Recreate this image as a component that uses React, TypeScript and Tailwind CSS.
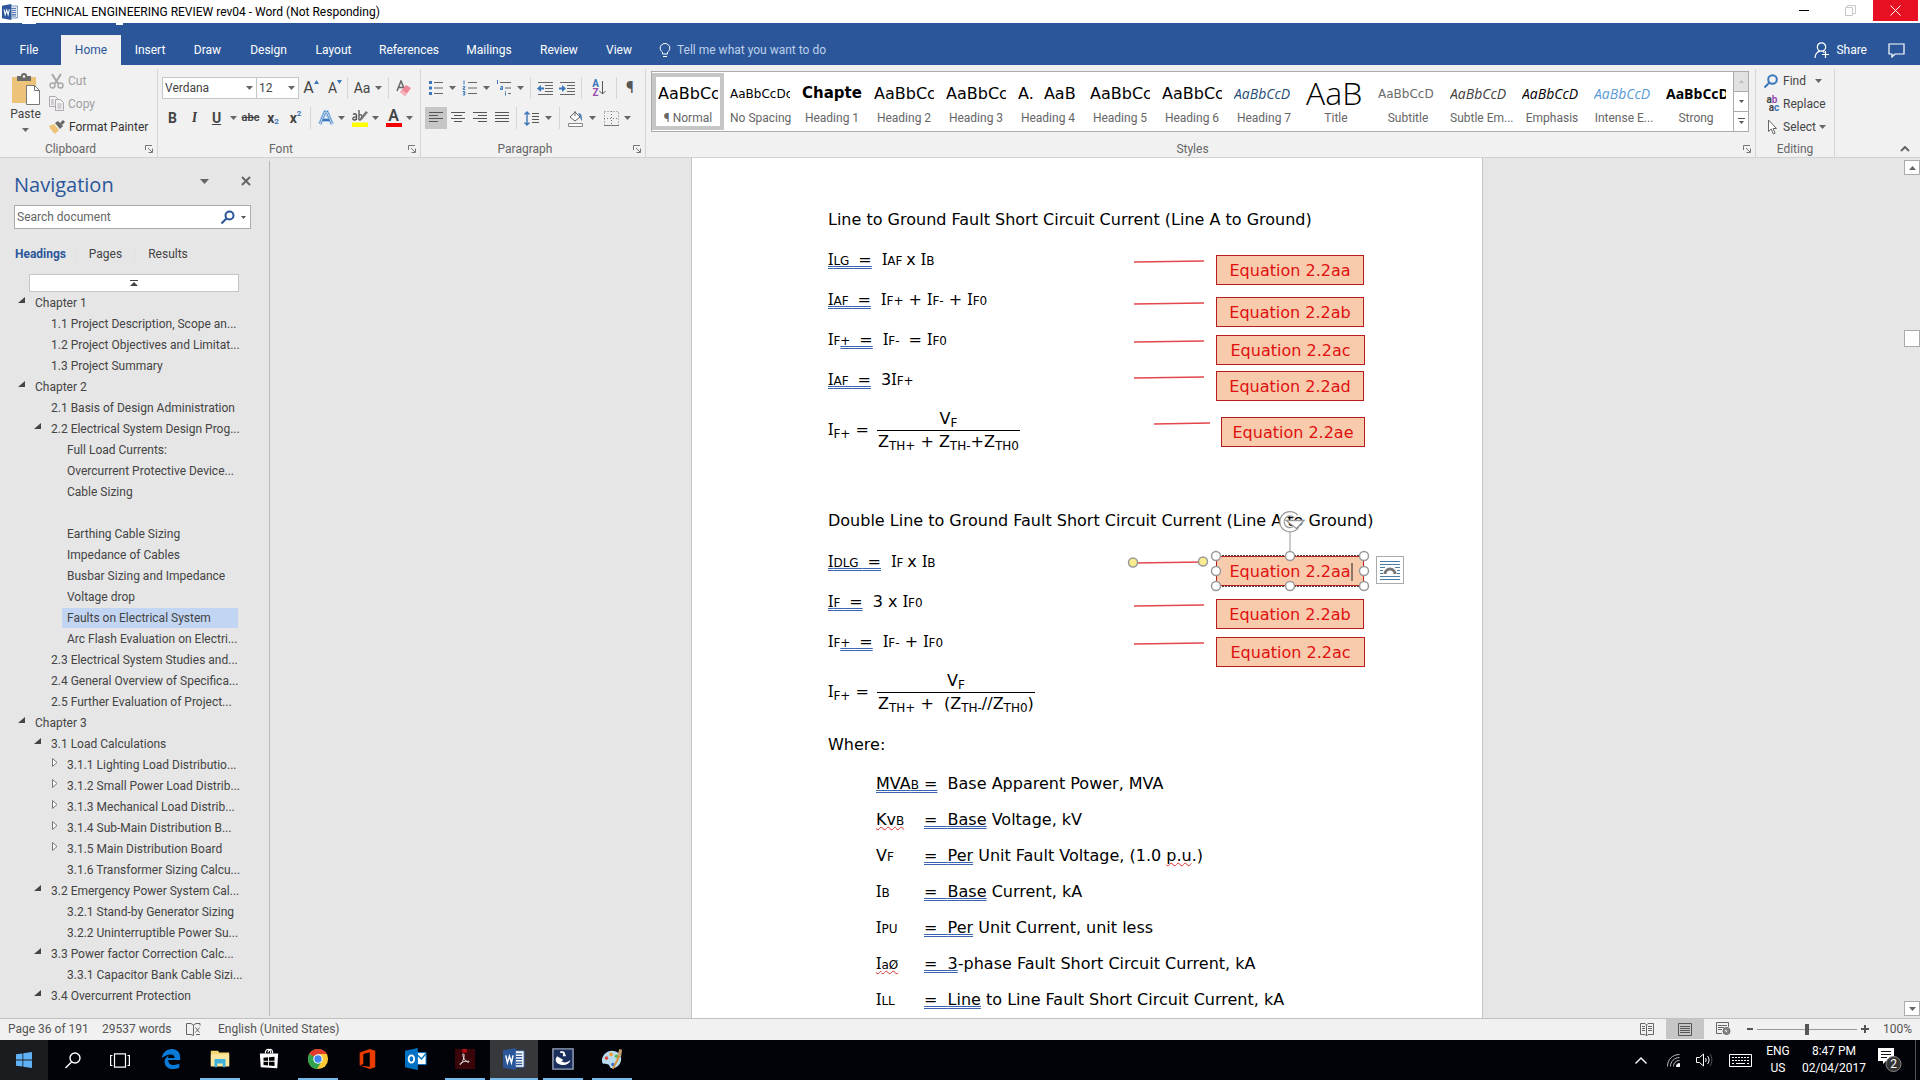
import type { ReactNode } from "react"
import clsx from "clsx"

const BLUE = "#2b579a"

function Arrow({ className = "" }: { className?: string }) {
  return (
    <svg width="7" height="4" viewBox="0 0 7 4" className={clsx("shrink-0", className)}>
      <path d="M0 0h7L3.500 4z" fill="#666" />
    </svg>
  )
}

function WordIcon({ size }: { size: number }) {
  return (
    <svg width={size} height={size} viewBox="0 0 24 24" className="shrink-0">
      <path d="M12 3h11v18H12z" fill="#fff" stroke={BLUE} />
      <path d="M14 6.500h7M14 9.500h7M14 12.500h7M14 15.500h7M14 18h7" stroke={BLUE} strokeWidth="1.400" />
      <path d="M0 2.500 14 0v24L0 21.500z" fill={BLUE} />
      <path d="m3 8 1.800 8L7 9l2.200 7L11 8" fill="none" stroke="#fff" strokeWidth="1.600" />
    </svg>
  )
}

/* ---------- Title bar and tabs ---------- */

function TitleBar() {
  return (
    <header className="flex h-[23px] shrink-0 items-start justify-between bg-white">
      <div className="flex h-6 items-center gap-[6px] pl-[2px] text-black">
        <WordIcon size={16} />
        <span>TECHNICAL ENGINEERING REVIEW rev04 - Word (Not Responding)</span>
      </div>
      <div className="flex h-[21px] pr-[2px]">
        <button aria-label="Minimize" className="flex w-[46px] items-center justify-center">
          <span className="h-px w-[10px] bg-black" />
        </button>
        <button aria-label="Restore" className="flex w-[46px] items-center justify-center">
          <svg width="11" height="11" fill="none" stroke="#c8c8c8">
            <path d="M.5 2.500h7v8h-7zM2.500 2.500v-2h8v8h-3" />
          </svg>
        </button>
        <button aria-label="Close" className="flex w-[45px] items-center justify-center bg-[#e81123]">
          <svg width="11" height="11" stroke="#fff">
            <path d="m.5.5 10 10M10.500.5l-10 10" />
          </svg>
        </button>
      </div>
    </header>
  )
}

const tabs = [
  { name: "Insert", width: "w-[58px]" },
  { name: "Draw", width: "w-[57px]" },
  { name: "Design", width: "w-[65px]" },
  { name: "Layout", width: "w-[65px]" },
  { name: "References", width: "w-[86px]" },
  { name: "Mailings", width: "w-[74px]" },
  { name: "Review", width: "w-[66px]" },
  { name: "View", width: "w-[54px]" },
]

function TabStrip() {
  return (
    <nav className="relative flex h-[42px] shrink-0 items-end bg-[#2b579a] text-white">
      <span className="absolute top-0 left-[22px] h-px w-[14px] bg-white" />
      <span className="absolute top-0 left-[116px] h-[2px] w-[7px] bg-white" />
      <button className="h-[30px] w-[61px] pr-[3px]">File</button>
      <button className="h-[30px] w-[60px] bg-[#f1f1f1] text-[#2b579a]">Home</button>
      {tabs.map((tab) => (
        <button key={tab.name} className={clsx("h-[30px] text-center", tab.width)}>
          {tab.name}
        </button>
      ))}
      <button className="ml-[13px] flex h-[30px] items-center gap-[6px] text-[#bfd0ea]">
        <svg width="12" height="15" viewBox="0 0 12 15" fill="none" stroke="#fff">
          <path d="M3.500 11V9.200C2 8 1.200 6.800 1.200 5a4.800 4.500 0 0 1 9.600 0c0 1.800-.8 3-2.300 4.200V11zM4 13.500h4" />
        </svg>
        Tell me what you want to do
      </button>
      <div className="ml-auto flex h-[30px] items-center">
        <button className="flex items-center gap-[6px]">
          <svg width="16" height="17" viewBox="0 0 16 17" fill="none" stroke="#fff" strokeWidth="1.200">
            <circle cx="7.500" cy="5" r="4.200" />
            <path d="M1 16c.3-4 2.300-6.200 5-6.800M8.500 9.300l2 1.200M11.500 9v7M8 12.500h7" />
          </svg>
          Share
        </button>
        <button aria-label="Comments" className="mr-[15px] ml-[21px]">
          <svg width="17" height="15" viewBox="0 0 17 15" fill="none" stroke="#fff" strokeWidth="1.200">
            <path d="M1 1h15v10H7l-3 3v-3H1z" />
          </svg>
        </button>
      </div>
    </nav>
  )
}

/* ---------- Ribbon ---------- */

function Group({
  label,
  launcher = true,
  className,
  children,
}: {
  label: string
  launcher?: boolean
  className?: string
  children: ReactNode
}) {
  return (
    <section className={clsx("flex h-[88px] flex-col border-r border-[#d5d5d5]", className)}>
      <div className="min-h-0 flex-1">{children}</div>
      <div className="flex h-4 items-center gap-2 px-1">
        <span className="flex-1 text-center text-[#666]">{label}</span>
        {launcher && (
          <button aria-label={label + " settings"}>
            <svg width="8" height="8" fill="none" stroke="#777">
              <path d="M.5 5V.5H7M3 3l4 4M7.500 3.500v4h-4" />
            </svg>
          </button>
        )}
      </div>
    </section>
  )
}

function Tool({ label, className, children }: { label: string; className: string; children: ReactNode }) {
  return (
    <button aria-label={label} className={clsx("flex h-[22px] items-center justify-center", className)}>
      {children}
    </button>
  )
}

function Sep() {
  return <span className="mx-[3px] h-[22px] w-px bg-[#d5d5d5]" />
}

function Clipboard() {
  return (
    <Group label="Clipboard" className="w-[158px]">
      <div className="flex text-[#a0a0a0]">
        <button className="flex w-[49px] flex-col items-center pt-1 pl-[2px] text-[#444]">
          <svg width="30" height="32" viewBox="0 0 30 32">
            <path d="M1 4h24v26H1z" fill="#ecc378" />
            <path d="M6 3h4a3 3 0 0 1 6 0h4v5H6z" fill="#6a6a6a" />
            <circle cx="13" cy="3.500" r="1.300" fill="#f1f1f1" />
            <path d="M15.500 12.500h8l5 5v14h-13z" fill="#fff" stroke="#777" />
            <path d="M23.500 12.500v5h5" fill="none" stroke="#777" />
          </svg>
          <span className="mt-px leading-4">Paste</span>
          <Arrow className="mt-[6px]" />
        </button>
        <div className="flex flex-col">
          <button className="flex h-[23px] items-center gap-1">
            <svg width="15" height="16" viewBox="0 0 15 16" fill="none" stroke="#a8a8a8" strokeWidth="1.400">
              <path d="M3 1l6 9.500M12 1 6 10.500" strokeWidth="2" />
              <circle cx="3.500" cy="12.500" r="2.500" />
              <circle cx="11.500" cy="12.500" r="2.500" />
            </svg>
            Cut
          </button>
          <button className="flex h-[23px] items-center gap-1">
            <svg width="15" height="15" viewBox="0 0 15 15" fill="#f1f1f1" stroke="#b0a8b0">
              <path d="M.5.5h6l2 2v8h-8zM2 4h3M2 6h3M2 8h3" />
              <path d="M6.500 3.500h5l3 3v8h-8zM8.500 8h4M8.500 10h4M8.500 12h4" />
            </svg>
            Copy
          </button>
          <button className="flex h-[23px] items-center gap-1 text-[#333]">
            <svg width="16" height="14" viewBox="0 0 16 14">
              <path d="m0 6 5-2 5 6-4 4C4 12 2 10 0 6z" fill="#ecc378" />
              <path d="m6 3 3-2 5 5-3 3z" fill="#666" />
              <path d="m11 3 3-3 2 2-3 3z" fill="#666" />
            </svg>
            Format Painter
          </button>
        </div>
      </div>
    </Group>
  )
}

function FontGroup() {
  return (
    <Group label="Font" className="w-[263px]">
      <div className="flex items-center pt-2 pl-1 text-[#444]">
        <label className="relative block">
          <span className="sr-only">Font name</span>
          <select className="h-[22px] w-[95px] appearance-none border border-[#c6c6c6] bg-white pl-[2px] text-[#444]">
            <option>Verdana</option>
          </select>
          <Arrow className="pointer-events-none absolute top-[9px] right-1" />
        </label>
        <label className="relative -ml-px block">
          <span className="sr-only">Font size</span>
          <select className="h-[22px] w-[43px] appearance-none border border-[#c6c6c6] bg-white pl-[2px] text-[#444]">
            <option>12</option>
          </select>
          <Arrow className="pointer-events-none absolute top-[9px] right-1" />
        </label>
        <Tool label="Grow font" className="w-6">
          <span className="text-base leading-4">A</span>
          <svg width="5" height="4" className="mb-3">
            <path d="M0 4h5L2.500 0z" fill="#3a76b8" />
          </svg>
        </Tool>
        <Tool label="Shrink font" className="w-6">
          <span className="text-sm leading-4">A</span>
          <svg width="5" height="4" className="mb-3">
            <path d="M0 0h5L2.500 4z" fill="#3a76b8" />
          </svg>
        </Tool>
        <span className="h-[22px] w-px bg-[#d5d5d5]" />
        <Tool label="Change case" className="w-10 gap-[5px]">
          <span className="text-sm">Aa</span>
          <Arrow />
        </Tool>
        <span className="h-[22px] w-px bg-[#d5d5d5]" />
        <Tool label="Clear formatting" className="w-[30px]">
          <svg width="16" height="17" viewBox="0 0 16 17">
            <path d="M1 11 5 1l3 7M2.500 7.500H7" fill="none" stroke="#666" strokeWidth="1.500" />
            <path d="m4 12 6-7 5 3-6 8z" fill="#ee8496" />
            <path d="m4 12 2-2 5 3.500L9 16z" fill="#f7b3bf" />
          </svg>
        </Tool>
      </div>
      <div className="mt-2 flex items-center pl-1 text-sm text-[#444]">
        <Tool label="Bold" className="w-[21px] font-bold">B</Tool>
        <Tool label="Italic" className="w-[23px] font-serif font-bold italic">I</Tool>
        <Tool label="Underline" className="w-[21px] font-bold underline">U</Tool>
        <Tool label="Underline style" className="w-3">
          <Arrow />
        </Tool>
        <Tool label="Strikethrough" className="w-[23px] text-[11px] font-semibold line-through">abc</Tool>
        <Tool label="Subscript" className="w-[22px] font-bold">
          x<span className="mt-2 text-[8px] text-[#3a76b8]">2</span>
        </Tool>
        <Tool label="Superscript" className="w-[23px] font-bold">
          x<span className="mb-2 text-[8px] text-[#3a76b8]">2</span>
        </Tool>
        <Sep />
        <Tool label="Text effects" className="w-[34px] gap-1">
          <svg width="16" height="16" viewBox="0 0 16 16" fill="none">
            <path d="M2 14 7 2h2l5 12M4.500 10h7" stroke="#a9cdf0" strokeWidth="4" />
            <path d="M2 14 7 2h2l5 12M4.500 10h7" stroke="#3a76b8" strokeWidth="2" />
            <path d="M2 14 7 2h2l5 12" stroke="#fff" strokeWidth=".8" />
          </svg>
          <Arrow />
        </Tool>
        <Tool label="Highlight" className="w-[34px] gap-1">
          <svg width="16" height="18" viewBox="0 0 16 18">
            <path d="M1 5.500c2-1.500 3.500-.5 3.500 1V11M4.500 8C0 7.500 0 11 2.500 11c1 0 2-1 2-2M7 1v10M7 6c4-2 4 5 0 5" fill="none" stroke="#555" strokeWidth="1.300" />
            <path d="m7 12 1-3 6-7 2 1.500-6 7z" fill="#777" />
            <path d="M0 13.500h16V18H0z" fill="#ff0" />
          </svg>
          <Arrow />
        </Tool>
        <Tool label="Font color" className="w-[34px] gap-1">
          <span className="flex w-4 flex-col">
            <span className="text-center text-base leading-[14px] font-semibold">A</span>
            <span className="h-1 bg-[#f00000]" />
          </span>
          <Arrow />
        </Tool>
      </div>
    </Group>
  )
}

function Lines({ d }: { d: string }) {
  return (
    <svg width="14" height="12" viewBox="0 0 14 12" stroke="#555">
      <path d={d} />
    </svg>
  )
}

function Paragraph() {
  return (
    <Group label="Paragraph" className="w-[225px]">
      <div className="flex items-center pt-2 pl-1">
        <Tool label="Bullets" className="w-[34px] gap-[5px]">
          <svg width="16" height="16" viewBox="0 0 16 16">
            <path d="M1 1h3v3H1zM1 6.500h3v3H1zM1 12h3v3H1z" fill="#3a76b8" />
            <path d="M6 2.500h9M6 8h9M6 13.500h9" stroke="#666" />
          </svg>
          <Arrow />
        </Tool>
        <Tool label="Numbering" className="w-[34px] gap-[5px]">
          <svg width="16" height="16" viewBox="0 0 16 16">
            <path d="M2 .5v4M0.800 6.500h2v1.500h-1.500v1.500h2M.8 11.500h2v3.500h-2M1 13.200h1.800" stroke="#3a76b8" fill="none" />
            <path d="M6 2.500h9M6 8h9M6 13.500h9" stroke="#666" />
          </svg>
          <Arrow />
        </Tool>
        <Tool label="Multilevel list" className="w-[34px] gap-[5px]">
          <svg width="16" height="16" viewBox="0 0 16 16">
            <path d="M1.500 0v4M4.500 6.500h2v3h-2v-1.500h2M9.500 11v.8M9.500 12.500v3" stroke="#3a76b8" fill="none" />
            <path d="M4 2.500h11M9 8h6M12 13.500h3" stroke="#666" />
          </svg>
          <Arrow />
        </Tool>
        <Sep />
        <Tool label="Decrease indent" className="w-[22px]">
          <svg width="16" height="13" viewBox="0 0 16 13">
            <path d="M1 .5h15M8 3.500h8M8 6.500h8M8 9.500h8M1 12.500h15" stroke="#666" />
            <path d="M0 6.500 4 3v2.500h3v2H4V10z" fill="#3a76b8" />
          </svg>
        </Tool>
        <Tool label="Increase indent" className="w-[22px]">
          <svg width="16" height="13" viewBox="0 0 16 13">
            <path d="M1 .5h15M8 3.500h8M8 6.500h8M8 9.500h8M1 12.500h15" stroke="#666" />
            <path d="M7 6.500 3 3v2.500H0v2h3V10z" fill="#3a76b8" />
          </svg>
        </Tool>
        <Sep />
        <Tool label="Sort" className="w-7">
          <span className="flex flex-col text-[10px] leading-[9px] font-bold">
            <span className="text-[#3a76b8]">A</span>
            <span className="text-[#9a4fb0]">Z</span>
          </span>
          <svg width="7" height="14" fill="none" stroke="#555">
            <path d="M3.500 0v13M.5 10l3 3 3-3" />
          </svg>
        </Tool>
        <Sep />
        <Tool label="Show marks" className="w-5 text-base text-[#555]">¶</Tool>
      </div>
      <div className="mt-2 flex items-center pl-1">
        <Tool label="Align left" className="w-[22px] bg-[#c6c6c6]">
          <Lines d="M0 .5h14M0 3.500h9M0 6.500h14M0 9.500h9" />
        </Tool>
        <Tool label="Center" className="w-[22px]">
          <Lines d="M0 .5h14M3 3.500h8M0 6.500h14M3 9.500h8" />
        </Tool>
        <Tool label="Align right" className="w-[22px]">
          <Lines d="M0 .5h14M5 3.500h9M0 6.500h14M5 9.500h9" />
        </Tool>
        <Tool label="Justify" className="w-[22px]">
          <Lines d="M0 .5h14M0 3.500h14M0 6.500h14M0 9.500h14" />
        </Tool>
        <Sep />
        <Tool label="Line spacing" className="w-9 gap-[5px]">
          <svg width="16" height="15" viewBox="0 0 16 15" fill="none">
            <path d="M3 1v13M.5 3.500 3 1l2.500 2.500M.5 11.500 3 14l2.500-2.500" stroke="#3a76b8" strokeWidth="1.400" />
            <path d="M8 2.500h7M8 5.500h7M8 8.500h7M8 11.500h7" stroke="#555" />
          </svg>
          <Arrow />
        </Tool>
        <Sep />
        <Tool label="Shading" className="w-9 gap-[5px]">
          <svg width="17" height="17" viewBox="0 0 17 17" fill="none">
            <path d="m3 7 5-5 5 5-5 4zM8 1v5" stroke="#666" fill="#fff" />
            <path d="M11 3c4 0 4 4 4 8-2-2-1-4-4-8z" fill="#3a76b8" />
            <path d="M1.500 13.500h14v3h-14z" stroke="#888" fill="#fff" />
          </svg>
          <Arrow />
        </Tool>
        <Tool label="Borders" className="w-9 gap-[5px]">
          <svg width="15" height="15" viewBox="0 0 15 15" fill="none" stroke="#777">
            <path d="M.5.5h14v14H.5zM7.500 0v14M0 7.500h14" strokeDasharray="1 2" />
            <path d="M0 14.500h15" />
          </svg>
          <Arrow />
        </Tool>
      </div>
    </Group>
  )
}

const styles = [
  { name: "¶ Normal", sample: "AaBbCc", look: "text-base text-black" },
  { name: "No Spacing", sample: "AaBbCcDc", look: "text-xs text-black" },
  { name: "Heading 1", sample: "Chapte", look: "text-[15px] font-bold text-black" },
  { name: "Heading 2", sample: "AaBbCc", look: "text-base text-black" },
  { name: "Heading 3", sample: "AaBbCc", look: "text-base text-black" },
  { name: "Heading 4", sample: "A.  AaB", look: "text-base text-black" },
  { name: "Heading 5", sample: "AaBbCc", look: "text-base text-black" },
  { name: "Heading 6", sample: "AaBbCc", look: "text-base text-black" },
  { name: "Heading 7", sample: "AaBbCcD", look: "font-['Open_Sans',sans-serif] text-sm italic text-[#1f4d78]" },
  { name: "Title", sample: "AaB", look: "font-['Open_Sans',sans-serif] text-[32px] font-light text-black" },
  { name: "Subtitle", sample: "AaBbCcD", look: "text-xs text-[#6a6a6a]" },
  { name: "Subtle Em...", sample: "AaBbCcD", look: "font-['Open_Sans',sans-serif] text-sm italic text-[#404040]" },
  { name: "Emphasis", sample: "AaBbCcD", look: "font-['Open_Sans',sans-serif] text-sm italic text-black" },
  { name: "Intense E...", sample: "AaBbCcD", look: "font-['Open_Sans',sans-serif] text-sm italic text-[#5b9bd5]" },
  { name: "Strong", sample: "AaBbCcD", look: "font-['Open_Sans',sans-serif] text-sm font-bold text-black" },
]

function Styles() {
  return (
    <Group label="Styles" className="min-w-0 flex-1">
      <div className="mt-[2px] mr-[6px] ml-[5px] flex h-[61px] border border-[#ababab] bg-white">
        <div className="flex min-w-0 flex-1 overflow-hidden py-px">
          {styles.map((style, i) => (
            <button
              key={style.name}
              className={clsx(
                "flex w-[72px] shrink-0 flex-col border-4 px-[2px]",
                i === 0 ? "border-[#c6c6c6]" : "border-transparent",
              )}
            >
              <span
                className={clsx(
                  "flex h-[33px] w-full items-center overflow-hidden font-['DejaVu_Sans',sans-serif] whitespace-pre",
                  style.look,
                )}
              >
                {style.sample}
              </span>
              <span className="w-full text-center leading-4 whitespace-nowrap text-[#666]">{style.name}</span>
            </button>
          ))}
        </div>
        <div className="flex w-[15px] flex-col divide-y divide-[#ababab] border-l border-[#ababab]">
          <button aria-label="Previous styles" className="flex flex-1 items-center justify-center bg-[#e1e1e1]">
            <svg width="5" height="3">
              <path d="M0 3h5L2.500 0z" fill="#bbb" />
            </svg>
          </button>
          <button aria-label="Next styles" className="flex flex-1 items-center justify-center">
            <svg width="5" height="3">
              <path d="M0 0h5L2.500 3z" fill="#555" />
            </svg>
          </button>
          <button aria-label="More styles" className="flex flex-1 items-center justify-center">
            <svg width="7" height="7">
              <path d="M0 .5h7" stroke="#555" />
              <path d="M1 3h5L3.500 6z" fill="#555" />
            </svg>
          </button>
        </div>
      </div>
    </Group>
  )
}

function Editing() {
  return (
    <Group label="Editing" launcher={false} className="w-[79px]">
      <div className="flex flex-col pl-2 text-[#444]">
        <button className="flex h-[23px] items-center gap-[5px]">
          <svg width="14" height="14" viewBox="0 0 14 14" fill="none" stroke="#3a76b8" strokeWidth="2">
            <circle cx="8.500" cy="5.500" r="4.300" />
            <path d="m5.500 8.500-5 5" />
          </svg>
          Find <Arrow className="ml-1" />
        </button>
        <button className="flex h-[23px] items-center gap-[3px]">
          <span className="flex w-4 flex-col text-[10px] leading-[8px] font-bold">
            <span>a<span className="text-[#9a4fb0]">b</span></span>
            <span className="pl-1">a<span className="text-[#3a76b8]">c</span></span>
          </span>
          Replace
        </button>
        <button className="flex h-[23px] items-center gap-[3px]">
          <svg width="16" height="16" viewBox="0 0 16 16" fill="#fff" stroke="#666">
            <path d="M4.500 1v11.500l2.800-2.500 2 5 1.800-.8-2-4.700h3.400z" />
          </svg>
          Select <Arrow />
        </button>
      </div>
    </Group>
  )
}

function Ribbon() {
  return (
    <div className="flex h-[93px] shrink-0 border-b border-[#d2d2d2] bg-[#f1f1f1] pt-1">
      <Clipboard />
      <FontGroup />
      <Paragraph />
      <Styles />
      <Editing />
      <div className="flex w-[85px] items-end justify-end pr-[10px] pb-[5px]">
        <button aria-label="Collapse ribbon">
          <svg width="10" height="6" fill="none" stroke="#666" strokeWidth="2">
            <path d="m1 5 4-4 4 4" />
          </svg>
        </button>
      </div>
    </div>
  )
}

/* ---------- Navigation pane ---------- */

type Heading = { text: string; level: 1 | 2 | 3; mark?: "open" | "closed"; current?: boolean }

const headings: Heading[] = [
  { text: "Chapter 1", level: 1, mark: "open" },
  { text: "1.1 Project Description, Scope an...", level: 2 },
  { text: "1.2 Project Objectives and Limitat...", level: 2 },
  { text: "1.3 Project Summary", level: 2 },
  { text: "Chapter 2", level: 1, mark: "open" },
  { text: "2.1 Basis of Design Administration", level: 2 },
  { text: "2.2 Electrical System Design Prog...", level: 2, mark: "open" },
  { text: "Full Load Currents:", level: 3 },
  { text: "Overcurrent Protective Device...", level: 3 },
  { text: "Cable Sizing", level: 3 },
  { text: "", level: 3 },
  { text: "Earthing Cable Sizing", level: 3 },
  { text: "Impedance of Cables", level: 3 },
  { text: "Busbar Sizing and Impedance", level: 3 },
  { text: "Voltage drop", level: 3 },
  { text: "Faults on Electrical System", level: 3, current: true },
  { text: "Arc Flash Evaluation on Electri...", level: 3 },
  { text: "2.3 Electrical System Studies and...", level: 2 },
  { text: "2.4 General Overview of Specifica...", level: 2 },
  { text: "2.5 Further Evaluation of Project...", level: 2 },
  { text: "Chapter 3", level: 1, mark: "open" },
  { text: "3.1 Load Calculations", level: 2, mark: "open" },
  { text: "3.1.1 Lighting Load Distributio...", level: 3, mark: "closed" },
  { text: "3.1.2 Small Power Load Distrib...", level: 3, mark: "closed" },
  { text: "3.1.3 Mechanical Load Distrib...", level: 3, mark: "closed" },
  { text: "3.1.4 Sub-Main Distribution B...", level: 3, mark: "closed" },
  { text: "3.1.5 Main Distribution Board", level: 3, mark: "closed" },
  { text: "3.1.6 Transformer Sizing Calcu...", level: 3 },
  { text: "3.2 Emergency Power System Cal...", level: 2, mark: "open" },
  { text: "3.2.1 Stand-by Generator Sizing", level: 3 },
  { text: "3.2.2 Uninterruptible Power Su...", level: 3 },
  { text: "3.3 Power factor Correction Calc...", level: 2, mark: "open" },
  { text: "3.3.1 Capacitor Bank Cable Sizi...", level: 3 },
  { text: "3.4 Overcurrent Protection", level: 2, mark: "open" },
]

const indent = { 1: "pl-[18px]", 2: "pl-[34px]", 3: "pl-[50px]" }

function HeadingRow({ heading }: { heading: Heading }) {
  return (
    <li className={clsx("flex h-[21px] items-center pr-[31px]", indent[heading.level])}>
      <span className="flex w-3 shrink-0">
        {heading.mark === "open" && (
          <svg width="7" height="7" className="mb-1">
            <path d="M7 0v6H0z" fill="#444" />
          </svg>
        )}
        {heading.mark === "closed" && (
          <svg width="7" height="9" className="mb-1 ml-[2px]">
            <path d="M.5.5v8l4.500-4z" fill="#fff" stroke="#777" />
          </svg>
        )}
      </span>
      <a
        href="#"
        className={clsx("h-5 min-w-0 flex-1 pl-[5px] leading-5 whitespace-nowrap", heading.current && "bg-[#c2d5f2]")}
      >
        {heading.text}
      </a>
    </li>
  )
}

function NavigationPane() {
  return (
    <aside className="mt-[3px] mb-[2px] w-[270px] shrink-0 overflow-hidden border-r border-[#b8b8b8] text-[#444]">
      <div className="flex h-11 items-center pr-[18px] pl-[14px]">
        <h2 className="mt-1 flex-1 font-['Open_Sans',sans-serif] text-xl leading-6 text-[#2b579a]">Navigation</h2>
        <button aria-label="Pane options" className="mr-8 mb-1">
          <svg width="9" height="5">
            <path d="M0 0h9L4.500 5z" fill="#666" />
          </svg>
        </button>
        <button aria-label="Close pane" className="mb-1">
          <svg width="10" height="10" stroke="#666" strokeWidth="2">
            <path d="m1 1 8 8M9 1 1 9" />
          </svg>
        </button>
      </div>
      <div className="mr-[18px] ml-[14px] flex h-6 items-center border border-[#ababab] bg-white pr-1">
        <input
          aria-label="Search document"
          placeholder="Search document"
          className="min-w-0 flex-1 pl-[2px] outline-none placeholder:text-[#666]"
        />
        <button aria-label="Search">
          <svg width="14" height="14" viewBox="0 0 14 14" fill="none" stroke={BLUE} strokeWidth="2">
            <circle cx="8.500" cy="5.500" r="4" />
            <path d="m5.500 8.500-5 5" />
          </svg>
        </button>
        <button aria-label="Search options" className="ml-[6px]">
          <svg width="5" height="3">
            <path d="M0 0h5L2.500 3z" fill="#555" />
          </svg>
        </button>
      </div>
      <div className="flex h-[45px] items-center pt-1">
        <button className="w-[77px] border-r border-[#e0e0e0] pl-[5px] font-bold text-[#2b579a]">Headings</button>
        <button className="w-[58px] border-r border-[#e0e0e0]">Pages</button>
        <button className="w-[66px]">Results</button>
      </div>
      <button aria-label="Jump to start" className="ml-[29px] flex h-[18px] w-[210px] items-center justify-center border border-[#c6c6c6] bg-white">
        <svg width="8" height="7">
          <path d="M0 .5h8" stroke="#444" />
          <path d="M0 6h8L4 2z" fill="#444" />
        </svg>
      </button>
      <ul>
        {headings.map((heading, i) => (
          <HeadingRow key={i} heading={heading} />
        ))}
      </ul>
    </aside>
  )
}

/* ---------- Document ---------- */

function V({ v = "I", sub, drop }: { v?: string; sub: string; drop?: boolean }) {
  return (
    <>
      <span className={clsx("leading-none", v === "I" && "font-['Noto_Sans',sans-serif]")}>{v}</span>
      <span className={clsx("text-xs leading-none", drop && "align-[-3px]")}>{sub}</span>
    </>
  )
}

function Grammar({ children }: { children: ReactNode }) {
  return (
    <span className="underline decoration-[#3a64b0] decoration-double decoration-1 underline-offset-1 [text-decoration-skip-ink:none]">
      {children}
    </span>
  )
}

function Spelling({ children }: { children: ReactNode }) {
  return (
    <span className="underline decoration-[#e03030] decoration-wavy decoration-1 underline-offset-1 [text-decoration-skip-ink:none]">
      {children}
    </span>
  )
}

function Fraction({ children }: { children: ReactNode }) {
  return (
    <span className="inline-flex flex-col items-stretch leading-[22px]">
      <span className="border-b border-black text-center">
        <V v="V" sub="F" drop />
      </span>
      <span className="px-px">{children}</span>
    </span>
  )
}

const terms = [
  { symbol: <Spelling>Kv<span className="text-xs leading-none">B</span></Spelling>, lead: "Base", rest: " Voltage, kV" },
  { symbol: <V v="V" sub="F" />, lead: "Per", rest: <> Unit Fault Voltage, (1.0 <Spelling>p.u</Spelling>.)</> },
  { symbol: <V sub="B" />, lead: "Base", rest: " Current, kA" },
  { symbol: <V sub="PU" />, lead: "Per", rest: " Unit Current, unit less" },
  { symbol: <Spelling><V sub="aØ" /></Spelling>, lead: "3", rest: "-phase Fault Short Circuit Current, kA" },
  { symbol: <V sub="LL" />, lead: "Line", rest: " to Line Fault Short Circuit Current, kA" },
]

// Floating shapes anchored to the page
const callouts = [
  { text: "Equation 2.2aa", box: "top-[97px] left-[524px] w-[148px]", line: "top-[102px] left-[442px] w-[70px]" },
  { text: "Equation 2.2ab", box: "top-[139px] left-[524px] w-[148px]", line: "top-[144px] left-[442px] w-[70px]" },
  { text: "Equation 2.2ac", box: "top-[177px] left-[524px] w-[149px]", line: "top-[182px] left-[442px] w-[70px]" },
  { text: "Equation 2.2ad", box: "top-[213px] left-[524px] w-[148px]", line: "top-[218px] left-[442px] w-[70px]" },
  { text: "Equation 2.2ae", box: "top-[259px] left-[529px] w-[144px]", line: "top-[264px] left-[462px] w-[56px]" },
  { text: "Equation 2.2aa", box: "top-[398px] left-[524px] w-[148px]", line: "top-[403px] left-[442px] w-[70px]" },
  { text: "Equation 2.2ab", box: "top-[441px] left-[524px] w-[148px]", line: "top-[446px] left-[442px] w-[70px]" },
  { text: "Equation 2.2ac", box: "top-[479px] left-[524px] w-[149px]", line: "top-[484px] left-[442px] w-[70px]" },
]

function Callouts() {
  return (
    <>
      {callouts.map((c, i) => (
        <div key={i}>
          <svg viewBox="0 0 70 3" preserveAspectRatio="none" className={clsx("absolute h-[3px]", c.line)}>
            <path d="M0 2 70 1" stroke="#e2474b" strokeWidth="1.500" />
          </svg>
          <div
            className={clsx(
              "absolute flex h-[30px] justify-center border border-[#b81c1c] bg-[#f8cbad] pt-1 whitespace-nowrap text-[#e01010]",
              c.box,
            )}
          >
            <span className="h-[19px] overflow-hidden leading-[22px]">{c.text}</span>
          </div>
        </div>
      ))}
      <Selection />
    </>
  )
}

const handles = [
  [16, 46], [90, 46], [164, 46],
  [16, 61], [164, 61],
  [16, 76], [90, 76], [164, 76],
]

function Selection() {
  return (
    <>
      <svg width="180" height="84" className="absolute top-[352px] left-[508px]" fill="none">
        <path d="M90 20v22" stroke="#999" />
        <path d="M16 45.500h148M16 76.500h148" stroke="#444" strokeDasharray="2 1" />
        <path d="M152 53v18" stroke="#222" />
        <path d="M96 6.500a8 8 0 1 0 1.500 8" stroke="#999" strokeWidth="5.500" />
        <path d="M96 6.500a8 8 0 1 0 1.500 8" stroke="#fff" strokeWidth="3" />
        <path d="M86 10.500h18l-7.500 8z" fill="#fff" stroke="#999" strokeWidth="1.300" />
        {handles.map(([x, y]) => (
          <circle key={x + "-" + y} cx={x} cy={y} r="4.500" fill="#fff" stroke="#999" strokeWidth="1.500" />
        ))}
      </svg>
      <svg width="84" height="14" className="absolute top-[397px] left-[435px]">
        <circle cx="6" cy="7.500" r="4.500" fill="#fbeb8f" stroke="#999" strokeWidth="1.500" />
        <circle cx="76" cy="6.500" r="4.500" fill="#fbeb8f" stroke="#999" strokeWidth="1.500" />
      </svg>
      <button aria-label="Layout options" className="absolute top-[398px] left-[684px] border border-[#ababab] bg-white">
        <svg width="26" height="26" viewBox="0 0 26 26" fill="none">
          <path d="M3 4.500h20M3 7.500h20M3 10.500h5M18 10.500h5M3 13.500h3M20 13.500h3M3 16.500h3M20 16.500h3M3 19.500h20M3 22.500h20" stroke="#4a80a8" />
          <path d="M8 17a5 5 0 0 1 10 0" stroke="#777" strokeWidth="3" />
        </svg>
      </button>
    </>
  )
}

function DocumentPage() {
  return (
    <main className="relative h-full w-[792px] shrink-0 overflow-hidden border-x border-[#c6c6c6] bg-white pt-[42px] pl-[136px] font-['DejaVu_Sans',sans-serif] text-base whitespace-pre text-black">
      <p className="leading-10">Line to Ground Fault Short Circuit Current (Line A to Ground)</p>
      <p className="leading-10"><Grammar><V sub="LG " />{" ="}</Grammar>{"  "}<V sub="AF " />x <V sub="B" /></p>
      <p className="leading-10"><Grammar><V sub="AF " />{" ="}</Grammar>{"  "}<V sub="F+" /> + <V sub="F-" /> + <V sub="F0" /></p>
      <p className="leading-10"><V sub="F" /><Grammar><span className="text-xs leading-none">{"+ "}</span>{" ="}</Grammar>{"  "}<V sub="F- " />{" = "}<V sub="F0" /></p>
      <p className="leading-10"><Grammar><V sub="AF " />{" ="}</Grammar>{"  3"}<V sub="F+" /></p>
      <div className="mb-10 flex h-[60px] items-center">
        <span className="mr-2"><V sub="F+" drop />{" ="}</span>
        <Fraction>
          <V v="Z" sub="TH+" drop /> + <V v="Z" sub="TH-" drop />+<V v="Z" sub="TH0" drop />
        </Fraction>
      </div>
      <p className="leading-[42px]">Double Line to Ground Fault Short Circuit Current (Line A to Ground)</p>
      <p className="leading-10"><Grammar><V sub="DLG " />{" ="}</Grammar>{"  "}<V sub="F " />x <V sub="B" /></p>
      <p className="leading-10"><Grammar><V sub="F " />{" ="}</Grammar>{"  3 x "}<V sub="F0" /></p>
      <p className="leading-10"><V sub="F" /><Grammar><span className="text-xs leading-none">{"+ "}</span>{" ="}</Grammar>{"  "}<V sub="F-" /> + <V sub="F0" /></p>
      <div className="flex h-[60px] items-center">
        <span className="mr-2"><V sub="F+" drop />{" ="}</span>
        <Fraction>
          <V v="Z" sub="TH+" drop />{" +  ("}<V v="Z" sub="TH-" drop />//<V v="Z" sub="TH0" drop />)
        </Fraction>
      </div>
      <p className="pt-[2px] leading-[42px]">Where:</p>
      <div className="pl-12 leading-9">
        <p><Grammar>MVA<span className="text-xs leading-none">B</span>{" ="}</Grammar>{"  Base Apparent Power, MVA"}</p>
        {terms.map((term, i) => (
          <p key={i} className="flex">
            <span className="w-12">{term.symbol}</span>
            <span><Grammar>{"=  "}{term.lead}</Grammar>{term.rest}</span>
          </p>
        ))}
      </div>
      <Callouts />
    </main>
  )
}

function ScrollBar() {
  return (
    <div className="flex h-full w-4 shrink-0 flex-col py-[2px]">
      <button aria-label="Scroll up" className="flex h-[15px] items-center justify-center border border-[#ababab] bg-white">
        <svg width="7" height="4"><path d="M0 4h7L3.500 0z" fill="#666" /></svg>
      </button>
      <span className="mt-[155px] h-[17px] border border-[#ababab] bg-white" />
      <button aria-label="Scroll down" className="mt-auto flex h-[15px] items-center justify-center border border-[#ababab] bg-white">
        <svg width="7" height="4"><path d="M0 0h7L3.500 4z" fill="#666" /></svg>
      </button>
    </div>
  )
}

/* ---------- Status bar ---------- */

function StatusBar() {
  return (
    <footer className="flex h-[22px] shrink-0 items-center border-t border-[#c0c0c0] bg-[#f1f1f1] pr-2 pb-px pl-2 text-[#555]">
      <span className="w-[94px]">Page 36 of 191</span>
      <span className="w-[84px]">29537 words</span>
      <svg width="15" height="13" viewBox="0 0 15 13" fill="none" stroke="#666">
        <path d="M7.500 12.500V2L5 .5H.5v11H5zM7.500 2 10 .5h4v2M10 11.500h4M9.500 4.500l4 5M13.500 4.500l-4 5" />
      </svg>
      <span className="ml-[17px]">English (United States)</span>
      <div className="ml-auto flex h-full items-center">
        <button aria-label="Read mode" className="flex h-full w-[38px] items-center justify-center">
          <svg width="14" height="13" viewBox="0 0 14 13" fill="none" stroke="#666">
            <path d="M6.500 2 5 .5H.5v11H5L6.500 13 8 11.500h5.500V.5H8zv11M2 3.500h3M2 5.500h3M2 7.500h3M8 3.500h4M8 5.500h4M8 7.500h4" />
          </svg>
        </button>
        <button aria-label="Print layout" className="flex h-full w-[38px] items-center justify-center bg-[#c6c6c6]">
          <svg width="14" height="13" viewBox="0 0 14 13" fill="none" stroke="#555">
            <path d="M.5.5h13v12H.5zM2 3.500h10M2 5.500h10M2 7.500h10M2 9.500h10" />
          </svg>
        </button>
        <button aria-label="Web layout" className="flex h-full w-[38px] items-center justify-center">
          <svg width="15" height="14" viewBox="0 0 15 14" fill="none" stroke="#666">
            <path d="M6 11.500H.5V.5h12V5M2 3.500h9M2 5.500h6M2 7.500h4" />
            <circle cx="10.500" cy="9" r="3.500" fill="#888" />
            <path d="m9 8 2 2" stroke="#fff" />
          </svg>
        </button>
        <button aria-label="Zoom out" className="mr-1 ml-[5px] h-[2px] w-[6px] bg-[#555]" />
        <label className="relative flex w-[100px] items-center">
          <span className="sr-only">Zoom</span>
          <input
            type="range"
            defaultValue="50"
            className="h-[11px] w-full appearance-none bg-[linear-gradient(#999,#999)] bg-[length:100%_1px] bg-center bg-no-repeat [&::-webkit-slider-thumb]:h-[11px] [&::-webkit-slider-thumb]:w-1 [&::-webkit-slider-thumb]:appearance-none [&::-webkit-slider-thumb]:bg-[#555]"
          />
        </label>
        <button aria-label="Zoom in" className="mx-1">
          <svg width="8" height="8" stroke="#555" strokeWidth="2">
            <path d="M0 4h8M4 0v8" />
          </svg>
        </button>
        <span className="ml-[3px] w-9 text-right">100%</span>
      </div>
    </footer>
  )
}

/* ---------- Taskbar ---------- */

const apps: { name: string; icon: ReactNode; running?: boolean; active?: boolean }[] = [
  {
    name: "Edge",
    icon: (
      <path
        d="M2 11C3 4 8 1 13 1c6 0 9 4 9 9v3H9c0 4 3 5.500 6 5.500 2.500 0 4.500-.5 6-1.500v4.500c-2 1-4.500 1.500-7 1.500-6 0-9-4-9-8 0-3 2-5.500 5-7-1 1-1.300 2-1.500 3H16c0-2.500-1.500-4-4-4-4 0-7 1.500-10 4z"
        fill="#0a7ad8"
      />
    ),
  },
  {
    name: "File Explorer",
    running: true,
    icon: (
      <>
        <path d="M2 3h8l1 2h11v15H2z" fill="#f7d774" />
        <path d="M2 7h20v13H2z" fill="#fbe8a0" />
        <path d="M6 12h12v9h-3v-4H9v4H6z" fill="#3fb0dc" />
      </>
    ),
  },
  {
    name: "Store",
    icon: (
      <>
        <path d="M8 6c0-6 6-6 6 0M11 5c0-5 5-5 5 1" fill="none" stroke="#fff" strokeWidth="1.300" />
        <path d="M2 6h20l-1 16-18-1z" fill="#fff" />
        <path d="M6 10.500 11 10v4H6zM12 10l6-.5V14h-6zM6 15h5v4l-5-.5zM12 15h6v4.500l-6-.5z" fill="#000" />
      </>
    ),
  },
  {
    name: "Chrome",
    running: true,
    icon: (
      <>
        <circle cx="12" cy="12" r="11" fill="#fcc934" />
        <path d="M12 12 2.500 6.500A11 11 0 0 1 21.500 6.500H12z" fill="#e23c2e" />
        <path d="M12 12 2.500 6.500A11 11 0 0 0 11 23l5-8.500z" fill="#2fa14f" />
        <circle cx="12" cy="12" r="5.200" fill="#fff" />
        <circle cx="12" cy="12" r="4" fill="#4285f4" />
      </>
    ),
  },
  { name: "Office", icon: <path d="m4 5 11-4 6 2v18l-6 2-11-4 11 1.500V4.500L8 6.500v11L4 19z" fill="#eb3c00" /> },
  {
    name: "Outlook",
    icon: (
      <>
        <path d="M13 5h10v13H13z" fill="#fff" stroke="#0072c6" />
        <path d="m13 7 5 5 5-6" fill="none" stroke="#0072c6" strokeWidth="1.500" />
        <path d="M0 3 14 0v24L0 21z" fill="#0072c6" />
        <ellipse cx="7" cy="12" rx="3" ry="4" fill="none" stroke="#fff" strokeWidth="2" />
      </>
    ),
  },
  {
    name: "Acrobat",
    running: true,
    icon: (
      <>
        <path d="M1 1h22v22H1z" fill="#3a0508" />
        <path d="M9 1h5v4H9z" fill="#b00c14" />
        <path d="M9.500 7c1-1.500 2 0 1.500 2-.5 4-2.500 8-4 9-1 .3-.5-1 1-2 2.500-1.300 6-2 8-1.500 1.500.7 0 1.500-1.500.7C12 14 10 11 9.500 7z" fill="none" stroke="#eee" />
      </>
    ),
  },
  { name: "Word", running: true, active: true, icon: null },
  {
    name: "Network Client",
    running: true,
    icon: (
      <>
        <path d="M1 1h22v22H1z" fill="#1b2f5c" stroke="#9aa6bd" strokeWidth="1.500" />
        <path d="M4 12c-1 8 15 9 16 1-3 3-7 3.500-10 1.500l2.500-1.500-7-4z" fill="#fff" />
        <path d="M9 4.500h2c2.500 0 2.500 1.500 2 3.500h2" fill="none" stroke="#fff" strokeWidth="2" />
      </>
    ),
  },
  {
    name: "Paint",
    running: true,
    icon: (
      <>
        <path d="M1 14C1 8 6 3 12 3s10 4 10 9-4 10-10 10c-3 0-2-3-4-4s-7 1-7-4z" fill="#b9dcee" />
        <circle cx="6" cy="11" r="2" fill="#e04a3a" />
        <circle cx="11" cy="7" r="2" fill="#f0a030" />
        <circle cx="17" cy="9" r="2" fill="#5cb84a" />
        <circle cx="13" cy="18" r="2" fill="#3a70c8" />
        <path d="m12 23 7-15 2 1-7 14z" fill="#d98f3a" />
        <path d="m18 8 2-7 3 1-1 7z" fill="#c8a070" />
      </>
    ),
  },
]

function Taskbar() {
  return (
    <footer className="flex h-10 shrink-0 bg-[#010308] text-white">
      <div className="flex gap-px">
        <button aria-label="Start" className="flex w-12 items-center justify-center bg-[#1a1c20]">
          <svg width="16" height="16" viewBox="0 0 16 16" fill="#5fb2f5">
            <path d="m0 2.300 6.500-.9v6.100H0zM7.300 1.200 16 0v7.500H7.300zM0 8.400h6.500v6.200L0 13.700zM7.300 8.400H16V16l-8.700-1.200z" />
          </svg>
        </button>
        <button aria-label="Search" className="flex w-12 items-center justify-center">
          <svg width="16" height="17" viewBox="0 0 16 17" fill="none" stroke="#fff" strokeWidth="1.400">
            <circle cx="10" cy="6" r="5" />
            <path d="m6.500 10-6 6" />
          </svg>
        </button>
        <button aria-label="Task view" className="flex w-12 items-center justify-center pr-1">
          <svg width="20" height="15" viewBox="0 0 20 15" fill="none" stroke="#fff" strokeWidth="1.200">
            <path d="M4.500.8h11v13.400h-11zM2.500 2.500H.6v10h1.900M17.500 2.500h1.900v10h-1.900" />
          </svg>
        </button>
        {apps.map((app) => (
          <button
            key={app.name}
            aria-label={app.name}
            className={clsx("flex w-12 flex-col items-center", app.active && "bg-[#36383c]")}
          >
            <span className="flex h-[38px] items-center">
              {app.icon ? (
                <svg width="22" height="22" viewBox="0 0 24 24">{app.icon}</svg>
              ) : (
                <WordIcon size={22} />
              )}
            </span>
            {app.running && <span className={clsx("h-[2px] bg-[#76b9ed]", app.active ? "w-full" : "w-10")} />}
          </button>
        ))}
      </div>
      <div className="ml-auto flex items-center">
        <button aria-label="Show hidden icons">
          <svg width="12" height="7" fill="none" stroke="#fff" strokeWidth="1.400">
            <path d="m.5 6.500 5.500-5.500 5.500 5.500" />
          </svg>
        </button>
        <svg width="13" height="13" viewBox="0 0 13 13" fill="none" stroke="#bbb" className="ml-5">
          <path d="M.5 12.500c0-7 5-12 12-12M3.500 12.500c0-5 4-9 9-9M6.500 12.500c0-3.500 2.500-6 6-6" />
          <path d="M9.500 12.500c0-2 1-3 3-3v3z" fill="#fff" stroke="#fff" />
        </svg>
        <svg width="17" height="14" viewBox="0 0 17 14" fill="none" stroke="#fff" className="ml-4">
          <path d="M.5 4.500h3l4-3.500v12l-4-3.500h-3zM9.500 5c.8 1.200.8 2.800 0 4M11.500 3c2 2.400 2 5.600 0 8" />
          <path d="M14 1c2.500 3.500 2.500 8.500 0 12" stroke="#555" />
        </svg>
        <svg width="23" height="13" viewBox="0 0 23 13" fill="none" stroke="#fff" className="ml-4">
          <path d="M.5.5h22v12H.5z" />
          <path d="M3 3.500h17M3 6.500h17" strokeDasharray="2 1" />
          <path d="M3 9.500h2M7 9.500h9M18 9.500h2" />
        </svg>
        <div className="ml-[10px] w-8 text-center leading-[17px]">ENG<br />US</div>
        <div className="ml-1 w-[72px] text-center leading-[17px]">8:47 PM<br />02/04/2017</div>
        <button aria-label="Notifications" className="relative ml-2 h-[26px] w-[25px]">
          <svg width="25" height="26" viewBox="0 0 25 26">
            <path d="M0 1h16v13H8l-3 3v-3H0z" fill="#fff" />
            <path d="M3 4.500h10M3 7.500h10M3 10.500h6" stroke="#111" />
            <circle cx="15.500" cy="17" r="7.500" fill="#333" stroke="#888" />
          </svg>
          <span className="absolute top-[9px] left-2 w-[15px] text-center leading-4">2</span>
        </button>
        <span className="ml-3 h-10 w-px bg-[#555]" />
        <span className="w-1" />
      </div>
    </footer>
  )
}

export default function App() {
  return (
    <div className="flex h-screen flex-col overflow-hidden bg-[#e6e6e6] font-[Roboto,sans-serif] text-xs">
      <TitleBar />
      <TabStrip />
      <Ribbon />
      <div className="flex min-h-0 flex-1">
        <NavigationPane />
        <div className="flex min-w-0 flex-1 justify-center">
          <DocumentPage />
        </div>
        <ScrollBar />
      </div>
      <StatusBar />
      <Taskbar />
    </div>
  )
}
